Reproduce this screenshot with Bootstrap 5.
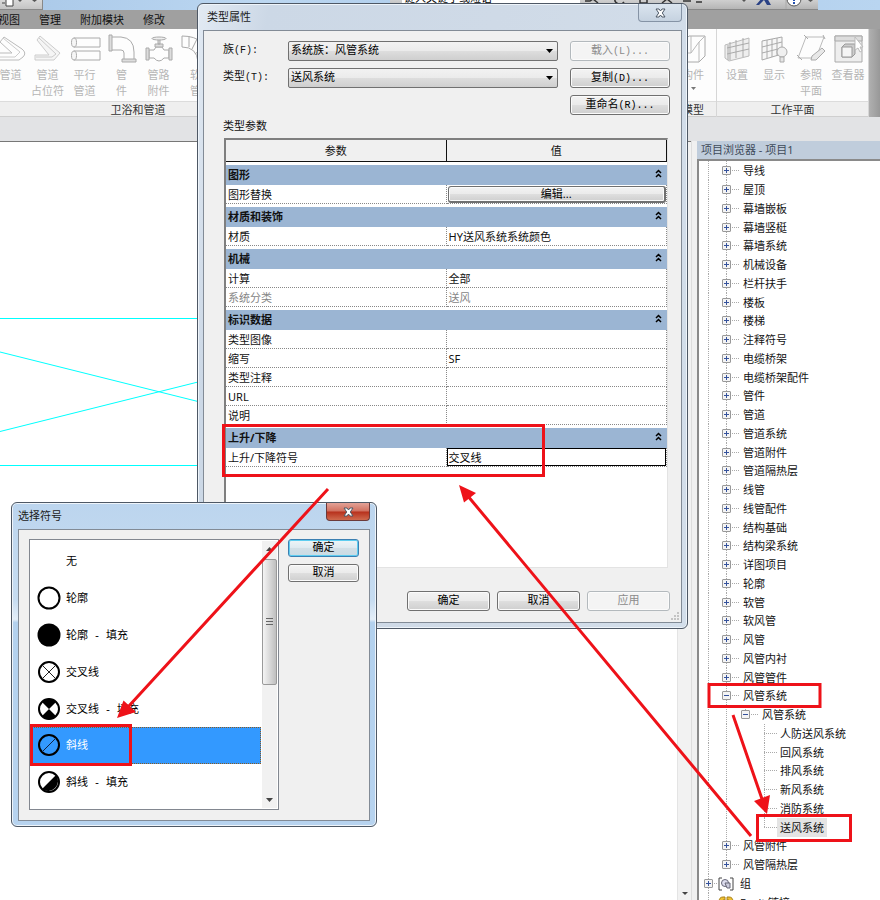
<!DOCTYPE html>
<html lang="zh-CN">
<head>
<meta charset="utf-8">
<meta name="viewport" content="width=device-width, initial-scale=1">
<title>类型属性</title>
<link href="https://cdn.jsdelivr.net/npm/bootstrap@5.3.0/dist/css/bootstrap.min.css" rel="stylesheet">
<style>
body{font:11px/16px "Noto Sans","Noto Sans CJK SC",sans-serif;color:#111;background:#fff}
.song{font-family:"Liberation Mono","Noto Sans CJK SC",monospace;font-size:11px}
.song kbd{all:unset;font:10px "Liberation Mono",monospace;white-space:pre}
/* application frame */
.quick{height:10px;background:linear-gradient(90deg,#a9c8e8,#bcd7f1 30%,#a9c9ea 60%,#b9d5f0)}
.quick-tools{width:43px;background:linear-gradient(#d8d8d8,#c4c4c4);border-right:1px solid #888;border-bottom:1px solid #888}
.quick-info{margin-right:62px;width:428px;background:linear-gradient(#cfcfcf,#b5b5b5);border-bottom:1px solid #888}
.quick-search{width:178px;height:14px;margin:-9px 0 0 12px;font-size:11px;border:0}
.tabs{height:19px;background:#a0a0a0;gap:19px;padding:0}
.tabs a{color:#111;text-decoration:none;line-height:20px}
.tabs a:first-child{margin-left:-2px}
.ribbon{height:88px;background:#fdfdfd}
.ribbon-group{border-right:1px solid #d6d6d6}
.caption{height:16px;line-height:15px;background:#efefef;border-top:1px solid #dcdcdc;border-bottom:1px solid #cfcfcf;color:#333}
.tools{height:72px;padding-top:4px}
.tool{width:37px;background:none;border:0;padding:0;color:#b5b5b5;line-height:16px;white-space:nowrap}
.tool svg{width:32px;height:32px;display:block;margin:0 auto 2px}
.grp-pipe{width:277px}
.grp-pipe .tools{margin-left:-8px}
.grp-model{width:47px}
.grp-plane{width:152px}
.ribbon-end{width:11px;background:linear-gradient(90deg,#b0b0b0,#989898)}
.optionbar{height:24px;background:#e2e3e5}
.sheet{border-top:1px solid #777;background:#fff}
.scroller{width:14px;background:#f2f2f2;border-left:1px solid #e4e4e4;border-top:1px solid #777}
.splitter{width:6px;background:#f0f0f0;border-left:1px solid #ddd}
.browser{width:183px}
.browser-title{height:18px;line-height:18px;background:#c0cddc;color:#3f4b5a;padding-left:4px}
.tree{border-top:2px solid #8a8a8a;border-left:2px solid #8a8a8a;list-style:none;background:#fff}
.tree li{height:19px;line-height:19px;white-space:nowrap;display:flex;align-items:center;background-repeat:no-repeat;
 --v:repeating-linear-gradient(#aaa 0 1px,transparent 1px 2px);--h:repeating-linear-gradient(90deg,#aaa 0 1px,transparent 1px 2px)}
.tree li:nth-child(4n){height:18px}
.lv1{background-image:var(--v),var(--v),var(--h);background-position:9px 0,27px 0,27px 9px;background-size:1px 100%,1px 100%,14px 1px;padding-left:23px}
.lv2{background-image:var(--v),var(--v),var(--v),var(--h);background-position:9px 0,27px 0,46px 0,46px 9px;background-size:1px 100%,1px 100%,1px 9px,14px 1px;padding-left:42px}
.lv3{background-image:var(--v),var(--v),var(--v),var(--h);background-position:9px 0,27px 0,65px 0,65px 9px;background-size:1px 100%,1px 100%,1px 100%,14px 1px;padding-left:81px}
.lv3.tail{background-size:1px 100%,1px 100%,1px 9px,14px 1px}
.lv1.tail{background-size:1px 100%,1px 9px,14px 1px}
.lv0{background-image:var(--v),var(--h);background-position:9px 0,9px 9px;background-size:1px 100%,10px 1px;padding-left:5px}
.knob{width:9px;height:9px;padding:0;margin-right:12px;border:1px solid #999;border-radius:1px;flex:none;
 background:linear-gradient(#35529c,#35529c) 1px 3px/5px 1px no-repeat,linear-gradient(#35529c,#35529c) 3px 1px/1px 5px no-repeat,#f4f4f4}
.knob.open{background:linear-gradient(#35529c,#35529c) 1px 3px/5px 1px no-repeat,#f4f4f4}
.lv0 .knob{margin-right:5px}
.lv0 svg{width:16px;height:16px;margin-right:6px}
.lv0.links{padding-left:19px}
.chosen{background:#e4e4e4;padding:0 3px;margin-left:-3px}
/* windows */
.win{position:absolute;border:1px solid #4e5865;border-radius:6px;box-shadow:inset 0 0 0 1px #eef4fa}
.win-type{left:197px;top:3px;width:491px;padding:0 5px 5px;background:linear-gradient(100deg,#e2eaf3,#ccd8e6 12%,#cfdae7 50%,#d3deea)}
.win-symbol{left:11px;top:502px;width:366px;padding:0 6px 5px;background:linear-gradient(#bcd5ee,#c6dcf1 30%,#e4eef8 36%,#b3d1ee 37%,#b7d3ef)}
.win-title{height:26px;line-height:26px;color:#1b1b1b}
.win-close{position:absolute;top:0;width:44px;height:18px;padding:0;border:1px solid #8593a5;border-top:0;border-radius:0 0 4px 4px;background:linear-gradient(#dbe5ef,#c5d2e0);display:grid;place-items:center}
.win-type .win-close{right:5px}
.win-symbol .win-close{right:6px;background:linear-gradient(#e3a297,#d0705f 48%,#b7301c 52%,#cf6a4e);border-color:#6b3a3a}
.win-close svg{width:11px;height:10px}
.client{background:#f0f0f0;border:1px solid #828b96}
.win-type .client{padding:10px 11px 11px 19px}
.win-symbol .client{padding:9px 10px 10px}
.btn.pc{--bs-btn-font-size:11px;padding:0;height:20px;line-height:18px;border:1px solid #707070;border-radius:3px;color:#000;background:linear-gradient(#f3f3f3,#ebebeb 48%,#dedede 52%,#cfcfcf);box-shadow:inset 0 0 0 1px #fbfbfb}
.btn.pc:disabled{color:#8b8b8b;background:#f4f4f4;border-color:#b3b9bd;opacity:1}
.btn.pc.main{border-color:#3c7fb1;box-shadow:inset 0 0 0 1px #5ecdf0;background:linear-gradient(#eef5f8,#dfeaf0 48%,#d2dfe6 52%,#c9dbe4)}
.form-select.pc{height:20px;padding:0 18px 0 2px;font-size:11px;line-height:18px;border:1px solid #707070;border-radius:2px;color:#000;
 background:url("data:image/svg+xml,%3Csvg xmlns='http://www.w3.org/2000/svg' viewBox='0 0 7 4'%3E%3Cpath d='M0 0h7L3.5 4z'/%3E%3C/svg%3E") right 4px center/7px 4px no-repeat,linear-gradient(#f2f2f2,#ebebeb 48%,#dddddd 52%,#cfcfcf)}
.fields{display:grid;grid-template-columns:65px 1fr 100px;row-gap:7px}
.fields select{width:calc(100% - 12px)!important}
.fields label{line-height:19px}
.params-label{padding:4px 0 3px}
.params{height:430px;border:1px solid #e3e3e3;border-left:2px solid #7f7f7f;border-top:2px solid #7f7f7f;background:#fff;margin:0 2px 23px 1px}
.params table{width:100%;table-layout:fixed;border-collapse:separate;border-spacing:0}
.params thead th{height:22px;padding:0;background:#f0f0f0;border-bottom:1px solid #111;border-right:1px solid #111;font-weight:400;text-align:center}
.bar th{height:23px;padding:0 2px;border-top:3px solid #fff;background:#9bb5d3;background-clip:padding-box;line-height:18px;font-weight:700}
.bar button{border:0;background:none;padding:0 3px 3px 0;line-height:0}
.bar svg{width:7px;height:9px}
.item th,.item td{height:19px;padding:0 2px;line-height:17px;font-weight:400;border-bottom:1px dotted #888;border-right:1px dotted #888;white-space:nowrap;text-align:left}
.item.off{color:#858585}
.item .btn.pc{height:17px;line-height:14px;width:100%;display:block;border-width:1px 2px 2px 1px}
.item .flush{padding:0 0 0 1px}
.cell-edit{width:100%;height:18px;border:1px solid #000;padding:0 1px;display:block;font-size:11px;line-height:15px;color:#000}
.actions{gap:7px}
.actions .btn{width:83px}
.grip{position:absolute;right:7px;bottom:7px;width:9px;height:9px}
.symbols{width:250px;height:271px;border:1px solid #828790;background:#fff;padding:3px 1px 1px}
.symbols .list-group{width:230px}
.symbols .list-group-item{height:37px;padding:0 0 0 6px;border:0;border-radius:0;display:flex;align-items:center;gap:5px;color:#000;background:none;line-height:16px}
.symbols .list-group-item svg{width:24px;height:24px;flex:none;margin-bottom:2px}
.symbols .list-group-item.active{background:#3399ff;color:#fff;outline:1px dotted #8a5a20;outline-offset:-1px;z-index:0}
.bar-y{width:15px;background:#f1f1f1;margin-top:-2px;padding:6px 0}
.bar-y svg{width:7px;height:4px}
.thumb{height:126px;border:1px solid #999;border-radius:2px;background:linear-gradient(90deg,#f4f4f4,#dcdcdc 45%,#bfbfbf)}
.confirm{width:71px;gap:7px}
.confirm .btn{height:18px;line-height:15px}
.notes{position:absolute;left:0;top:0;width:880px;height:900px;pointer-events:none;z-index:20}
.plan{width:300px;height:340px;display:block;margin-top:160px}
</style>
<script src="https://cdn.jsdelivr.net/npm/bootstrap@5.3.0/dist/js/bootstrap.bundle.min.js"></script>
</head>
<body class="vh-100 overflow-hidden position-relative d-flex flex-column">
<svg class="d-none">
<linearGradient id="metal" x2="0" y2="1"><stop stop-color="#fafafa"/><stop offset="1" stop-color="#dedede"/></linearGradient>
<symbol id="up2" viewBox="0 0 7 9"><path d="M1 4 3.500 1.500 6 4M1 8 3.500 5.500 6 8" fill="none" stroke="#000" stroke-width="1.500"/></symbol>
<symbol id="cross" viewBox="0 0 11 10"><path d="M1 1h3l1.500 2L7 1h3L7.300 5 10 9H7L5.500 7 4 9H1l2.700-4z" fill="#fff" stroke="#4c5866" stroke-width="1"/></symbol>
</svg>
<header>
<div class="quick d-flex justify-content-between overflow-hidden">
<div class="quick-tools"><svg class="d-block" width="42" height="8"><path d="M2 3h3M6 0v6h7V0" fill="#fff" stroke="#444"/><path d="M18 0h4l-2 2zM32 0h5l-2.500 2z" fill="#555"/></svg></div>
<div class="quick-info d-flex justify-content-between overflow-hidden"><input class="quick-search" aria-label="搜索" value="键入关键字或短语"><svg width="238" height="9"><path d="M5 1l5 0 3-2 5 4M35-2a5 5 0 0 0 9 4M60-1v4h7v-4M82 3l5-4 5 4M103 1h8M116 2h6" fill="none" stroke="#333" stroke-width="1.500"/><path d="M176 5l6-7h5l4 7h-4l-3-5-5 5z" fill="#2b4285"/><path d="M162 0h4l-2 2z" fill="#555"/><path d="M206 0v9" stroke="#aaa"/><circle cx="214" cy="-1" r="7" fill="#fff" stroke="#555"/><path d="M214-3v4m0 1v2" stroke="#2450b0" stroke-width="2"/><path d="M228 0h5l-2.500 2z" fill="#555"/></svg></div>
</div>
<nav class="tabs d-flex overflow-hidden"><a href="#">视图</a><a href="#">管理</a><a href="#">附加模块</a><a href="#">修改</a></nav>
<div class="ribbon d-flex justify-content-between overflow-hidden">
<section class="ribbon-group grp-pipe">
<div class="tools d-flex align-items-start">
<button class="tool"><svg viewBox="0 0 32 32"><path d="M9 4l18 12q5 4 1 8l-4 3H3v-7h14L5 9z" fill="url(#metal)" stroke="#bbb"/><path d="M8 5 25 19 20 24H4" fill="none" stroke="#ccc"/></svg>管道</button>
<button class="tool"><svg viewBox="0 0 32 32"><path d="M8 3l20 17-6 7H3v-5h14L5 7z" fill="#f5f5f5" stroke="#ccc"/><path d="M7 5l17 16-4 3H4" fill="none" stroke="#ccc"/></svg>管道<br>占位符</button>
<button class="tool"><svg viewBox="0 0 32 32"><path d="M5 5h26v9H5q-3-4 0-9zM5 18h26v9H5q-3-4 0-9z" fill="url(#metal)" stroke="#aaa"/><ellipse cx="5" cy="9.500" rx="2.500" ry="4.500" fill="#f6f6f6" stroke="#aaa"/><ellipse cx="5" cy="22.500" rx="2.500" ry="4.500" fill="#f6f6f6" stroke="#aaa"/></svg>平行<br>管道</button>
<button class="tool"><svg viewBox="0 0 32 32"><path d="M5 4h10q13 1 13 15v8H18v-7q0-3-3-3H5z" fill="url(#metal)" stroke="#aaa"/><path d="M3 2h3v16H3zM16 26h14v3H16z" fill="#ddd" stroke="#aaa"/></svg>管<br>件</button>
<button class="tool"><svg viewBox="0 0 32 32"><path d="M6 17h5l2-3h6l2 3h5v8h-5q-5 6-10 0H6z" fill="url(#metal)" stroke="#aaa"/><path d="M3 15h3v12H3zM26 15h3v12h-3zM12 11h8v3h-8zM15 6h2v5h-2z" fill="#ddd" stroke="#aaa"/><ellipse cx="16" cy="5.500" rx="7" ry="1.500" fill="#eee" stroke="#aaa"/></svg>管路<br>附件</button>
<button class="tool"><svg viewBox="0 0 32 32"><path d="M2 3q26 0 27 26H18Q17 14 2 14z" fill="url(#metal)" stroke="#aaa"/><path d="M9 3v11m8-8-5 10m12-2-9 7" stroke="#aaa"/></svg>软<br>管</button>
</div><div class="caption text-center">卫浴和管道</div></section>
<div class="d-flex">
<section class="ribbon-group grp-model"><div class="tools d-flex justify-content-center align-items-start"><button class="tool"><svg viewBox="0 0 32 32"><path d="M6 9l6-6h16v20l-6 6H6z" fill="url(#metal)" stroke="#aaa"/><path d="M14 3v17h-7m15-11v20m-8-9 8-11 6-6" fill="none" stroke="#bbb"/></svg>构件<svg style="width:5px;height:3px" class="mt-1" viewBox="0 0 5 3"><path d="M0 0h5L2.500 3z" fill="#777"/></svg></button></div><div class="caption text-center">模型</div></section>
<section class="ribbon-group grp-plane">
<div class="tools d-flex justify-content-center align-items-start">
<button class="tool"><svg viewBox="0 0 32 32"><path d="M4 12 28 5v18L8 28 4 25z" fill="#eee" stroke="#bbb"/><path d="M9 9v18m6-20v18m7-20v19M6 15l22-5M6 21l22-5M7 12v15" fill="none" stroke="#aaa"/></svg>设置</button>
<button class="tool"><svg viewBox="0 0 32 32"><path d="M4 8 24 4v17L4 27zM9 7v18m5-19v18m5-19v18M4 14l20-5M4 20l20-5" fill="#f6f6f6" stroke="#aaa"/><circle cx="24" cy="19" r="5" fill="#f0f0f0" stroke="#aaa"/><path d="M22 24h4v5h-4z" fill="#e5e5e5" stroke="#aaa"/></svg>显示</button>
<button class="tool"><svg viewBox="0 0 32 32"><path d="M11 4h18l-8 21H3z" fill="url(#metal)" stroke="#bbb"/><path d="M9 2l4 4M28 2l2 4M2 22l5 5" stroke="#aaa"/><path d="M16 27l1-4 10-8 3 3-9 9z" fill="#e8e8e8" stroke="#aaa"/></svg>参照<br>平面</button>
<button class="tool"><svg viewBox="0 0 32 32"><path d="M3 3h27v26H3z" fill="#eee" stroke="#aaa"/><path d="M3 3h27v5H3z" fill="#ddd" stroke="#aaa"/><path d="M10 14l3-3h10v10l-3 3H10z" fill="#ccc" stroke="#999"/><path d="M10 14h10v10H10z" fill="#f5f5f5" stroke="#999"/><path d="M23 4v13l3-2 2 4 2-1-2-4h3z" fill="#fff" stroke="#bbb"/></svg>查看器</button>
</div><div class="caption text-center">工作平面</div></section>
<div class="ribbon-end"></div></div>
</div>
<div class="optionbar"></div>
</header>
<main class="d-flex flex-grow-1 overflow-hidden">
<section class="sheet flex-grow-1 overflow-hidden">
<svg class="plan" viewBox="0 0 300 340" shape-rendering="crispEdges"><g fill="none" stroke="#0ff"><path d="M0 16.500h300M0 163.500h300"/><path d="M0 50l300 75M0 129.500l300-75" shape-rendering="auto"/></g></svg>
</section>
<div class="scroller d-flex flex-column justify-content-end align-items-center pb-1"><svg width="6" height="4"><path d="M0 0h6L3 3z" fill="#444"/></svg></div>
<div class="splitter"></div>
<aside class="browser d-flex flex-column">
<div class="browser-title">项目浏览器 - 项目1</div>
<ul class="tree m-0 p-0 flex-grow-1 overflow-hidden">
<li class="lv1"><button class="knob" aria-label="展开"></button>导线</li>
<li class="lv1"><button class="knob" aria-label="展开"></button>屋顶</li>
<li class="lv1"><button class="knob" aria-label="展开"></button>幕墙嵌板</li>
<li class="lv1"><button class="knob" aria-label="展开"></button>幕墙竖梃</li>
<li class="lv1"><button class="knob" aria-label="展开"></button>幕墙系统</li>
<li class="lv1"><button class="knob" aria-label="展开"></button>机械设备</li>
<li class="lv1"><button class="knob" aria-label="展开"></button>栏杆扶手</li>
<li class="lv1"><button class="knob" aria-label="展开"></button>楼板</li>
<li class="lv1"><button class="knob" aria-label="展开"></button>楼梯</li>
<li class="lv1"><button class="knob" aria-label="展开"></button>注释符号</li>
<li class="lv1"><button class="knob" aria-label="展开"></button>电缆桥架</li>
<li class="lv1"><button class="knob" aria-label="展开"></button>电缆桥架配件</li>
<li class="lv1"><button class="knob" aria-label="展开"></button>管件</li>
<li class="lv1"><button class="knob" aria-label="展开"></button>管道</li>
<li class="lv1"><button class="knob" aria-label="展开"></button>管道系统</li>
<li class="lv1"><button class="knob" aria-label="展开"></button>管道附件</li>
<li class="lv1"><button class="knob" aria-label="展开"></button>管道隔热层</li>
<li class="lv1"><button class="knob" aria-label="展开"></button>线管</li>
<li class="lv1"><button class="knob" aria-label="展开"></button>线管配件</li>
<li class="lv1"><button class="knob" aria-label="展开"></button>结构基础</li>
<li class="lv1"><button class="knob" aria-label="展开"></button>结构梁系统</li>
<li class="lv1"><button class="knob" aria-label="展开"></button>详图项目</li>
<li class="lv1"><button class="knob" aria-label="展开"></button>轮廓</li>
<li class="lv1"><button class="knob" aria-label="展开"></button>软管</li>
<li class="lv1"><button class="knob" aria-label="展开"></button>软风管</li>
<li class="lv1"><button class="knob" aria-label="展开"></button>风管</li>
<li class="lv1"><button class="knob" aria-label="展开"></button>风管内衬</li>
<li class="lv1"><button class="knob" aria-label="展开"></button>风管管件</li>
<li class="lv1"><button class="knob open" aria-label="折叠"></button>风管系统</li>
<li class="lv2"><button class="knob open" aria-label="折叠"></button>风管系统</li>
<li class="lv3">人防送风系统</li>
<li class="lv3">回风系统</li>
<li class="lv3">排风系统</li>
<li class="lv3">新风系统</li>
<li class="lv3">消防系统</li>
<li class="lv3 tail"><span class="chosen">送风系统</span></li>
<li class="lv1"><button class="knob" aria-label="展开"></button>风管附件</li>
<li class="lv1 tail"><button class="knob" aria-label="展开"></button>风管隔热层</li>
<li class="lv0"><button class="knob" aria-label="展开"></button><svg viewBox="0 0 16 16"><path d="M4 2H1v12h3M12 2h3v12h-3" fill="none" stroke="#444"/><circle cx="7" cy="7" r="3.500" fill="#dde" stroke="#667"/><path d="M7 7h5v5H9z" fill="#ccd" stroke="#667"/></svg>组</li>
<li class="lv0 links"><svg viewBox="0 0 16 16"><path d="M1 8q0-5 4-5h2v3H5v4H1zM9 3h2q4 0 4 5v2h-4V6H9z" fill="#f0c030" stroke="#a88018"/></svg>Revit 链接</li>
</ul>
</aside>
</main>

<section class="win win-type" role="dialog" aria-label="类型属性">
<div class="win-title ps-1">类型属性</div>
<button class="win-close" aria-label="关闭"><svg><use href="#cross"/></svg></button>
<div class="client d-flex flex-column">
<div class="fields song">
<label for="family">族<kbd>(F):</kbd></label><select id="family" class="form-select pc"><option>系统族：风管系统</option></select><button class="btn pc" disabled>载入<kbd>(L)...</kbd></button>
<label for="kind">类型<kbd>(T):</kbd></label><select id="kind" class="form-select pc"><option>送风系统</option></select><button class="btn pc">复制<kbd>(D)...</kbd></button>
<span></span><span></span><button class="btn pc">重命名<kbd>(R)...</kbd></button>
</div>
<div class="song params-label">类型参数</div>
<div class="params">
<table>
<thead><tr><th scope="col">参数</th><th scope="col">值</th></tr></thead>
<tbody>
<tr class="bar"><th colspan="2"><div class="d-flex justify-content-between">图形<button aria-label="折叠"><svg><use href="#up2"/></svg></button></div></th></tr>
<tr class="item"><th scope="row">图形替换</th><td class="flush"><button class="btn pc">编辑...</button></td></tr>
<tr class="bar"><th colspan="2"><div class="d-flex justify-content-between">材质和装饰<button aria-label="折叠"><svg><use href="#up2"/></svg></button></div></th></tr>
<tr class="item"><th scope="row">材质</th><td>HY送风系统系统颜色</td></tr>
<tr class="bar"><th colspan="2"><div class="d-flex justify-content-between">机械<button aria-label="折叠"><svg><use href="#up2"/></svg></button></div></th></tr>
<tr class="item"><th scope="row">计算</th><td>全部</td></tr>
<tr class="item off"><th scope="row">系统分类</th><td>送风</td></tr>
<tr class="bar"><th colspan="2"><div class="d-flex justify-content-between">标识数据<button aria-label="折叠"><svg><use href="#up2"/></svg></button></div></th></tr>
<tr class="item"><th scope="row">类型图像</th><td></td></tr>
<tr class="item"><th scope="row">缩写</th><td>SF</td></tr>
<tr class="item"><th scope="row">类型注释</th><td></td></tr>
<tr class="item"><th scope="row">URL</th><td></td></tr>
<tr class="item"><th scope="row">说明</th><td></td></tr>
<tr class="bar"><th colspan="2"><div class="d-flex justify-content-between">上升/下降<button aria-label="折叠"><svg><use href="#up2"/></svg></button></div></th></tr>
<tr class="item"><th scope="row"><label for="rise">上升/下降符号</label></th><td class="p-0"><input id="rise" class="cell-edit" value="交叉线"></td></tr>
</tbody>
</table>
</div>
<div class="actions d-flex justify-content-end song"><button class="btn pc">确定</button><button class="btn pc">取消</button><button class="btn pc" disabled>应用</button></div>
</div>
<svg class="grip" viewBox="0 0 9 9"><path d="M6 0h2v2H6zM3 3h2v2H3zM6 3h2v2H6zM0 6h2v2H0zM3 6h2v2H3zM6 6h2v2H6z" fill="#c4c4c4"/></svg>
</section>

<section class="win win-symbol" role="dialog" aria-label="选择符号">
<div class="win-title">选择符号</div>
<button class="win-close" aria-label="关闭"><svg><use href="#cross"/></svg></button>
<div class="client d-flex justify-content-between align-items-start">
<div class="symbols d-flex justify-content-between">
<div class="list-group song">
<button class="list-group-item"><svg viewBox="0 0 24 24"></svg>无</button>
<button class="list-group-item"><svg viewBox="0 0 24 24"><circle cx="12" cy="12" r="10.500" fill="#fff" stroke="#000" stroke-width="2"/></svg>轮廓</button>
<button class="list-group-item"><svg viewBox="0 0 24 24"><circle cx="12" cy="12" r="11.500"/></svg><span>轮廓<kbd> - </kbd>填充</span></button>
<button class="list-group-item"><svg viewBox="0 0 24 24"><circle cx="12" cy="12" r="10" fill="#fff" stroke="#000" stroke-width="2"/><path d="M5 5l14 14M19 5 5 19" stroke="#222"/></svg>交叉线</button>
<button class="list-group-item"><svg viewBox="0 0 24 24"><circle cx="12" cy="12" r="10" fill="#fff" stroke="#000" stroke-width="2"/><path d="M12 12 5 5q7-7 14 0zM12 12 5 19q7 7 14 0z"/></svg><span>交叉线<kbd> - </kbd>填充</span></button>
<button class="list-group-item active"><svg viewBox="0 0 24 24"><circle cx="12" cy="12" r="10" fill="none" stroke="#000" stroke-width="2"/><path d="M19 5 5 19" stroke="#124"/></svg>斜线</button>
<button class="list-group-item"><svg viewBox="0 0 24 24"><circle cx="12" cy="12" r="10" fill="#fff" stroke="#000" stroke-width="2"/><path d="M19 5 5 19a10 10 0 0 0 14-14z"/></svg><span>斜线<kbd> - </kbd>填充</span></button>
</div>
<div class="bar-y d-flex flex-column align-items-center"><svg class="mb-2 flex-shrink-0" viewBox="0 0 7 4"><path d="M0 4h7L3.500 0z" fill="#444"/></svg><div class="thumb w-100 d-grid align-items-center justify-content-center"><svg style="height:8px" viewBox="0 0 7 8"><path d="M0 .5h7M0 3.500h7M0 6.500h7" stroke="#666"/></svg></div><svg class="mt-auto flex-shrink-0" viewBox="0 0 7 4"><path d="M0 0h7L3.500 4z" fill="#444"/></svg></div>
</div>
<div class="confirm d-flex flex-column song"><button class="btn pc main">确定</button><button class="btn pc">取消</button></div>
</div>
</section>

<svg class="notes" viewBox="0 0 880 900"><g fill="none" stroke="#ee1219" stroke-width="3"><path d="M223.500 425.500h320v50h-320zM31.500 725.500h99v39h-99zM709 684.500h111v22H709zM757.500 815.500h93v25h-93z"/><path d="M328 489 128 707M751 836 467 495M733 715l29 84"/></g><g fill="#ee1219"><path d="M117 718l6.500-17.500L136 712zM459 485l17 8-12 9.500zM767 814l-13-13 16-6z"/></g></svg>
</body>
</html>
